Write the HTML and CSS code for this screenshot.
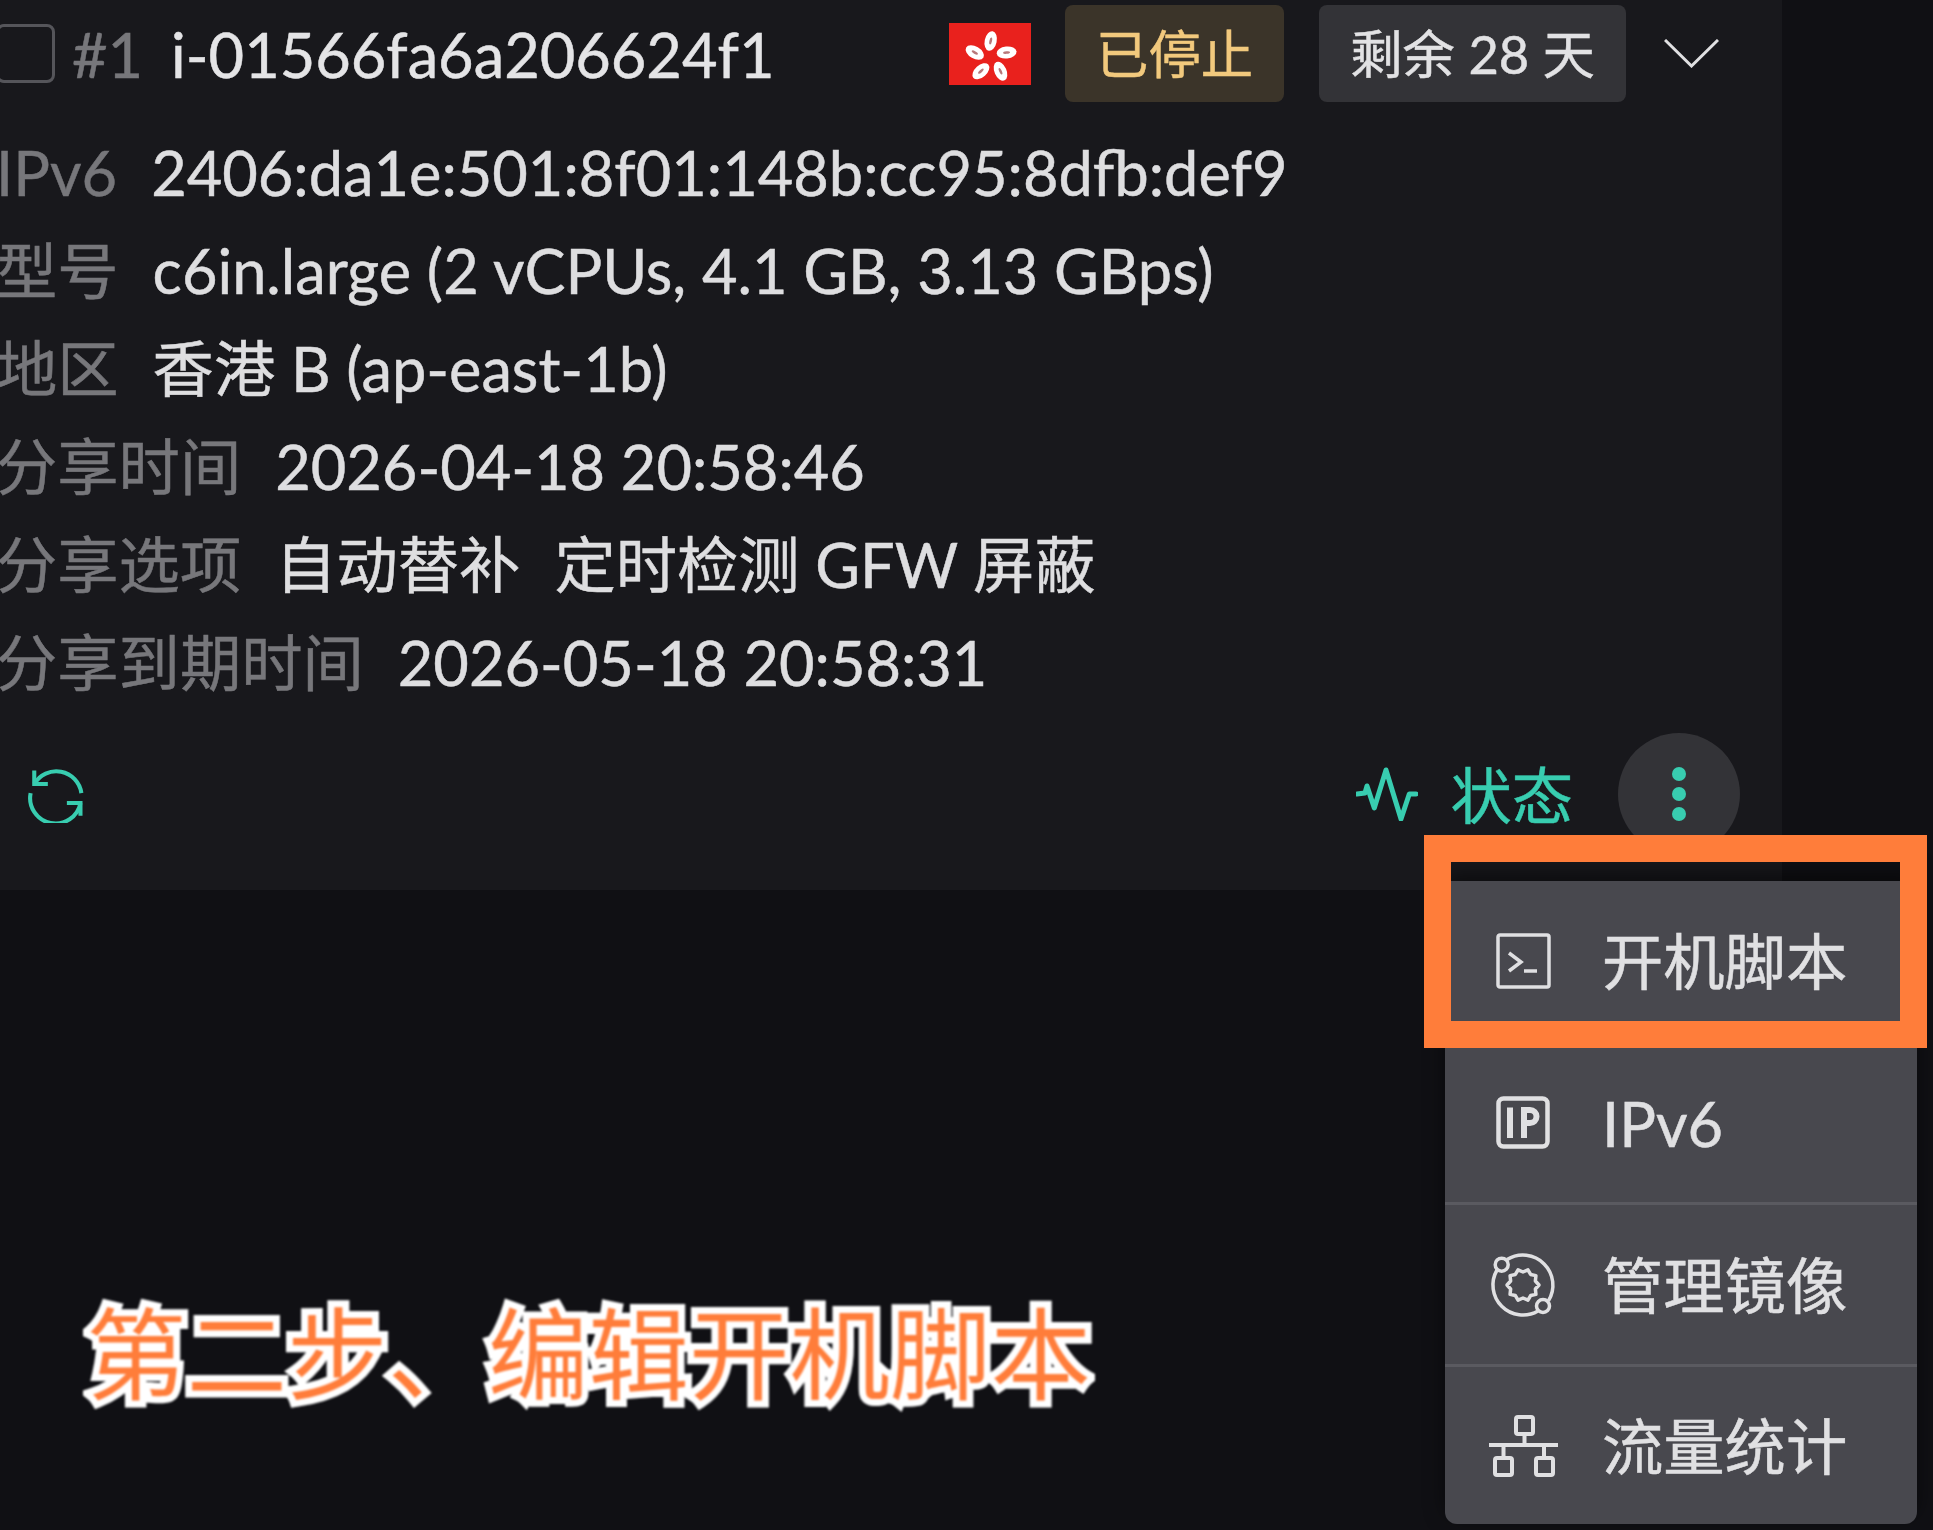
FILE: index.html
```html
<!DOCTYPE html>
<html lang="zh-CN">
<head>
<meta charset="utf-8">
<title>实例</title>
<link rel="stylesheet" href="styles.css">
</head>
<body>
<main class="card">
  <header class="head">
    <span class="check"></span>
    <span class="num">#1</span>
    <span class="iid">i-01566fa6a206624f1</span>
    <svg class="flag" viewBox="0 0 82 62" aria-label="香港">
      <rect width="82" height="62" fill="#e9211d"/>
      <g class="petal" transform="rotate(0 41.700 34.700)"><ellipse cx="41.700" cy="18" rx="6" ry="10" transform="rotate(12 41.700 18)"/><ellipse class="seed" cx="41.700" cy="18" rx="1.300" ry="3.500" transform="rotate(12 41.700 18)"/></g>
      <g class="petal" transform="rotate(72 41.700 34.700)"><ellipse cx="41.700" cy="18" rx="6" ry="10" transform="rotate(12 41.700 18)"/><ellipse class="seed" cx="41.700" cy="18" rx="1.300" ry="3.500" transform="rotate(12 41.700 18)"/></g>
      <g class="petal" transform="rotate(144 41.700 34.700)"><ellipse cx="41.700" cy="18" rx="6" ry="10" transform="rotate(12 41.700 18)"/><ellipse class="seed" cx="41.700" cy="18" rx="1.300" ry="3.500" transform="rotate(12 41.700 18)"/></g>
      <g class="petal" transform="rotate(216 41.700 34.700)"><ellipse cx="41.700" cy="18" rx="6" ry="10" transform="rotate(12 41.700 18)"/><ellipse class="seed" cx="41.700" cy="18" rx="1.300" ry="3.500" transform="rotate(12 41.700 18)"/></g>
      <g class="petal" transform="rotate(288 41.700 34.700)"><ellipse cx="41.700" cy="18" rx="6" ry="10" transform="rotate(12 41.700 18)"/><ellipse class="seed" cx="41.700" cy="18" rx="1.300" ry="3.500" transform="rotate(12 41.700 18)"/></g>
    </svg>
    <span class="tag tag-warn">已停止</span>
    <span class="tag tag-plain">剩余 28 天</span>
    <svg class="chev" viewBox="0 0 55 29" fill="none" stroke="#e0e0e2" stroke-width="3"><path d="M1 1 27.500 27 54 1"/></svg>
  </header>

  <dl class="info">
    <div class="row"><dt>IPv6</dt><dd>2406:da1e:501:8f01:148b:cc95:8dfb:def9</dd></div>
    <div class="row"><dt>型号</dt><dd>c6in.large (2 vCPUs, 4.1 GB, 3.13 GBps)</dd></div>
    <div class="row"><dt>地区</dt><dd>香港 B (ap-east-1b)</dd></div>
    <div class="row"><dt>分享时间</dt><dd>2026-04-18 20:58:46</dd></div>
    <div class="row"><dt>分享选项</dt><dd class="opts"><span>自动替补</span><span>定时检测 GFW 屏蔽</span></dd></div>
    <div class="row"><dt>分享到期时间</dt><dd>2026-05-18 20:58:31</dd></div>
  </dl>

  <footer class="foot">
    <svg class="refresh" viewBox="0 0 64 64" fill="none" stroke="#38cdb0" stroke-width="4.500">
      <path d="M8 21A28 28 0 0 1 60 31"/>
      <path d="M4 31A28 28 0 0 0 59 42"/>
      <path d="M8 6V21H23"/>
      <path d="M44 42H59V56"/>
    </svg>
    <span class="status">
      <svg class="pulse" viewBox="0 0 62 54" fill="none" stroke="#38cdb0" stroke-width="5" stroke-linejoin="round" stroke-linecap="round"><path d="M1 27 9 26 11 19 18.300 41 30 3 45 52 53.300 27H60"/></svg>
      <span>状态</span>
    </span>
    <span class="more"><i></i><i></i><i></i></span>
  </footer>
</main>

<nav class="menu">
  <div class="item">
    <span class="ico"><svg width="55" height="56" viewBox="0 0 55 56" fill="none" stroke="#e0e0e2" stroke-width="3.500"><rect x="2" y="2" width="51" height="52" rx="2"/><path d="M13 20 25 29 13 38M28 38H41"/></svg></span>
    <span>开机脚本</span>
  </div>
  <div class="item">
    <span class="ico"><svg width="54" height="53" viewBox="0 0 54 53" fill="none" stroke="#e0e0e2" stroke-width="4.500"><rect x="2.500" y="2.500" width="49" height="48" rx="5"/><path stroke-width="6" d="M14 11.500V42M28 42V14H34A6.500 6.500 0 0 1 34 27H28"/></svg></span>
    <span>IPv6</span>
  </div>
  <div class="item">
    <span class="ico"><svg width="66" height="66" viewBox="0 0 66 66" fill="none" stroke="#e0e0e2" stroke-width="3.500" stroke-linejoin="round"><path d="M17.100 7.600A30 30 0 0 1 58.400 48.900M48 59A30 30 0 0 1 7 18"/><circle cx="11.700" cy="12.700" r="6.500"/><circle cx="53" cy="54" r="6.500"/><polygon transform="translate(33 33)" points="16,0 12.360,4.020 12.940,9.400 7.640,10.520 4.940,15.220 0,13 -4.940,15.220 -7.640,10.520 -12.940,9.400 -12.360,4.020 -16,0 -12.360,-4.020 -12.940,-9.400 -7.640,-10.520 -4.940,-15.220 0,-13 4.940,-15.220 7.640,-10.520 12.940,-9.400 12.360,-4.020"/></svg></span>
    <span>管理镜像</span>
  </div>
  <div class="item">
    <span class="ico"><svg width="69" height="62" viewBox="0 0 69 62" fill="none" stroke="#e0e0e2" stroke-width="4"><rect x="27" y="2" width="17" height="17" rx="2"/><path d="M35.500 19V30M0 30H69M14.500 30V43M55 30V43"/><rect x="6" y="43" width="17" height="17" rx="2"/><rect x="47" y="43" width="17" height="17" rx="2"/></svg></span>
    <span>流量统计</span>
  </div>
</nav>

<div class="mark"></div>
<p class="note">第二步、编辑开机脚本</p>
</body>
</html>
```
FILE: styles.css
```css
* { box-sizing: border-box; }
html, body { margin: 0; padding: 0; }
html { background: #101014; }
body {
  position: relative;
  width: 1933px;
  height: 1530px;
  overflow: hidden;
  color: #dedee0;
  font-family: Lato, "Noto Sans CJK SC", sans-serif;
  font-size: 61.3px;
  line-height: 98px;
  -webkit-text-stroke: .5px currentColor;
  filter: blur(.55px);
}
.card {
  width: 1786px;
  margin-left: -4px;
  padding: 5px 42px 35px 0;
  background: #18181c;
}
.head { display: flex; align-items: center; height: 97px; }
.check {
  width: 59px;
  height: 59px;
  margin-right: 17px;
  border: 3px solid #55555a;
  border-radius: 8px;
}
.num { color: #77777b; margin-right: 28px; }
.iid { color: #e4e4e6; }
.flag { width: 82px; height: 62px; margin-left: auto; margin-right: 34px; }
.petal { fill: #fff; }
.seed { fill: #b8787a; }
.tag {
  height: 97px;
  display: flex;
  align-items: center;
  padding: 0 31px;
  border-radius: 8px;
  font-size: 52.4px;
}
.tag-warn { background: #3b3429; color: #f2c97d; margin-right: 35px; }
.tag-plain { background: #333337; color: #e2e2e4; }
.chev { width: 55px; height: 29px; margin: 0 21px 0 38px; }
.info { margin: 21px 0 22px; }
.row { display: flex; gap: 34px; height: 98px; }
dt { color: #77777b; }
dd { margin: 0; }
.opts { display: flex; gap: 34px; }
.foot { display: flex; align-items: center; height: 122px; padding-left: 31px; }
.refresh { width: 58px; height: 58px; margin-right: auto; }
.status { display: flex; align-items: center; gap: 32px; color: #38cdb0; margin-right: 45px; }
.status > span { position: relative; top: 1px; }
.pulse { width: 62px; height: 54px; }
.more {
  width: 122px;
  height: 122px;
  border-radius: 50%;
  background: #333337;
  display: flex;
  flex-direction: column;
  align-items: center;
  justify-content: center;
  gap: 6px;
}
.more i { width: 14px; height: 14px; border-radius: 50%; background: #38cdb0; }
.menu {
  position: absolute;
  left: 1445px;
  top: 881px;
  width: 472px;
  border-radius: 0 0 12px 12px;
  background: #48484e;
  color: #e0e0e2;
  box-shadow: 0 -8px 20px rgba(0, 0, 0, .5);
}
.item {
  display: flex;
  align-items: center;
  height: 162px;
  padding-left: 38px;
  border-top: 3px solid #5a5a60;
}
.item:first-child { height: 159px; border-top: 0; }
.item:last-child { height: 160px; }
.ico { width: 80px; margin-right: 39px; display: flex; justify-content: center; }
.mark {
  position: absolute;
  left: 1424px;
  top: 835px;
  width: 503px;
  height: 213px;
  border: 27px solid #ff7d3a;
}
.note {
  position: absolute;
  left: 86px;
  top: 1290px;
  margin: 0;
  font-size: 100.5px;
  line-height: 126px;
  font-weight: 400;
  color: #ff7d3a;
  -webkit-text-stroke: 14px #fff;
  paint-order: stroke fill;
  white-space: nowrap;
  filter: blur(.8px);
}
```
